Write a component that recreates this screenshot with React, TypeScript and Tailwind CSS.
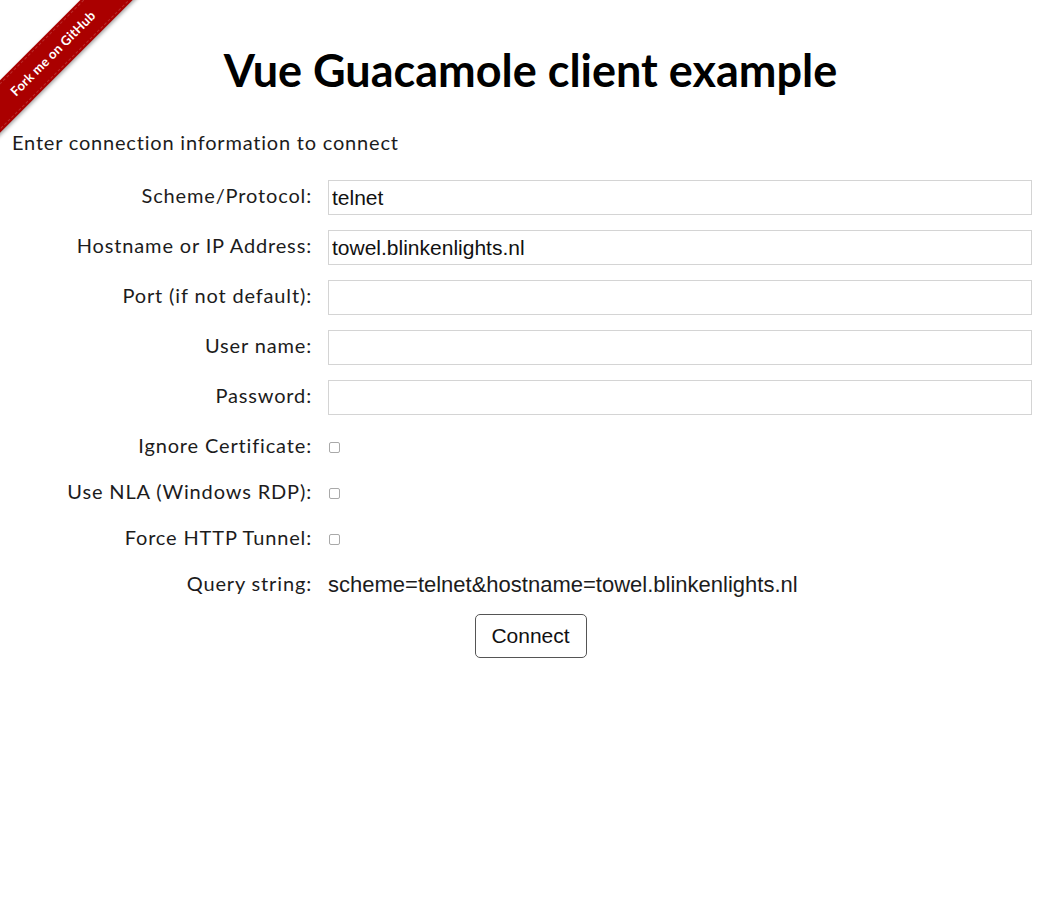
import type { ReactNode } from 'react';

const BODY = "font-['Lato','Noto_Sans',sans-serif]";
const FIELD = "font-['Liberation_Sans','Arial',sans-serif]";

type RowProps = {
  label: string;
  height: string;
  children: ReactNode;
};

function Row({ label, height, children }: RowProps) {
  return (
    <div className={`grid grid-cols-[312px_1fr] items-center gap-x-4 ${height}`}>
      <label className={`${BODY} pb-[5px] text-right text-[20px] tracking-[0.85px] text-[#1c1c1c]`}>{label}</label>
      <div className="flex h-full items-center">{children}</div>
    </div>
  );
}

function TextField({ value = '' }: { value?: string }) {
  return (
    <input
      readOnly
      value={value}
      className={`${FIELD} h-full w-full border border-[#d4d4d4] bg-white px-[3px] text-[21px] text-[#111] outline-none`}
    />
  );
}

function Check() {
  return (
    <span className="ml-px block h-[11px] w-[11px] rounded-[2px] border border-[#a9a9a9] bg-white" />
  );
}

function Ribbon() {
  return (
    <div className="pointer-events-none absolute left-0 top-0 h-[149px] w-[149px] overflow-hidden">
      <div className="absolute left-[-57px] top-[35px] flex h-[37px] w-[220px] -rotate-45 items-center justify-center bg-[#aa0000] shadow-[0_2px_4px_rgba(0,0,0,0.35)]">
        <div className="absolute inset-x-0 top-[2px] border-t border-dashed border-[rgba(255,255,255,0.18)]" />
        <div className="absolute inset-x-0 bottom-[2px] border-b border-dashed border-[rgba(255,255,255,0.18)]" />
        <span className={`${BODY} text-[13px] font-bold tracking-[0.2px] text-white`}>Fork me on GitHub</span>
      </div>
    </div>
  );
}

export default function App() {
  return (
    <div className="relative min-h-[899px] w-full bg-white">
      <Ribbon />
      <h1 className={`${BODY} pt-[42px] text-center text-[45px] font-bold leading-[56px] text-black`}>
        Vue Guacamole client example
      </h1>
      <p className={`${BODY} mt-[30px] pl-3 text-[20px] leading-[28px] tracking-[0.8px] text-[#1c1c1c]`}>
        Enter connection information to connect
      </p>

      <div className="mt-[24px] flex flex-col gap-4 pr-[29px]">
        <Row label="Scheme/Protocol:" height="h-[34px]">
          <TextField value="telnet" />
        </Row>
        <Row label="Hostname or IP Address:" height="h-[34px]">
          <TextField value="towel.blinkenlights.nl" />
        </Row>
        <Row label="Port (if not default):" height="h-[34px]">
          <TextField />
        </Row>
        <Row label="User name:" height="h-[34px]">
          <TextField />
        </Row>
        <Row label="Password:" height="h-[34px]">
          <TextField />
        </Row>
        <Row label="Ignore Certificate:" height="h-[30px]">
          <Check />
        </Row>
        <Row label="Use NLA (Windows RDP):" height="h-[30px]">
          <Check />
        </Row>
        <Row label="Force HTTP Tunnel:" height="h-[30px]">
          <Check />
        </Row>
        <Row label="Query string:" height="h-[30px]">
          <span className={`${FIELD} pb-[2px] text-[22px] text-[#1c1c1c]`}>
            scheme=telnet&amp;hostname=towel.blinkenlights.nl
          </span>
        </Row>
        <div className="flex justify-center pl-[29px]">
          <button
            className={`${FIELD} h-[44px] w-[112px] rounded-[5px] border border-[#555] bg-white text-[21px] text-[#111]`}
          >
            Connect
          </button>
        </div>
      </div>
    </div>
  );
}
